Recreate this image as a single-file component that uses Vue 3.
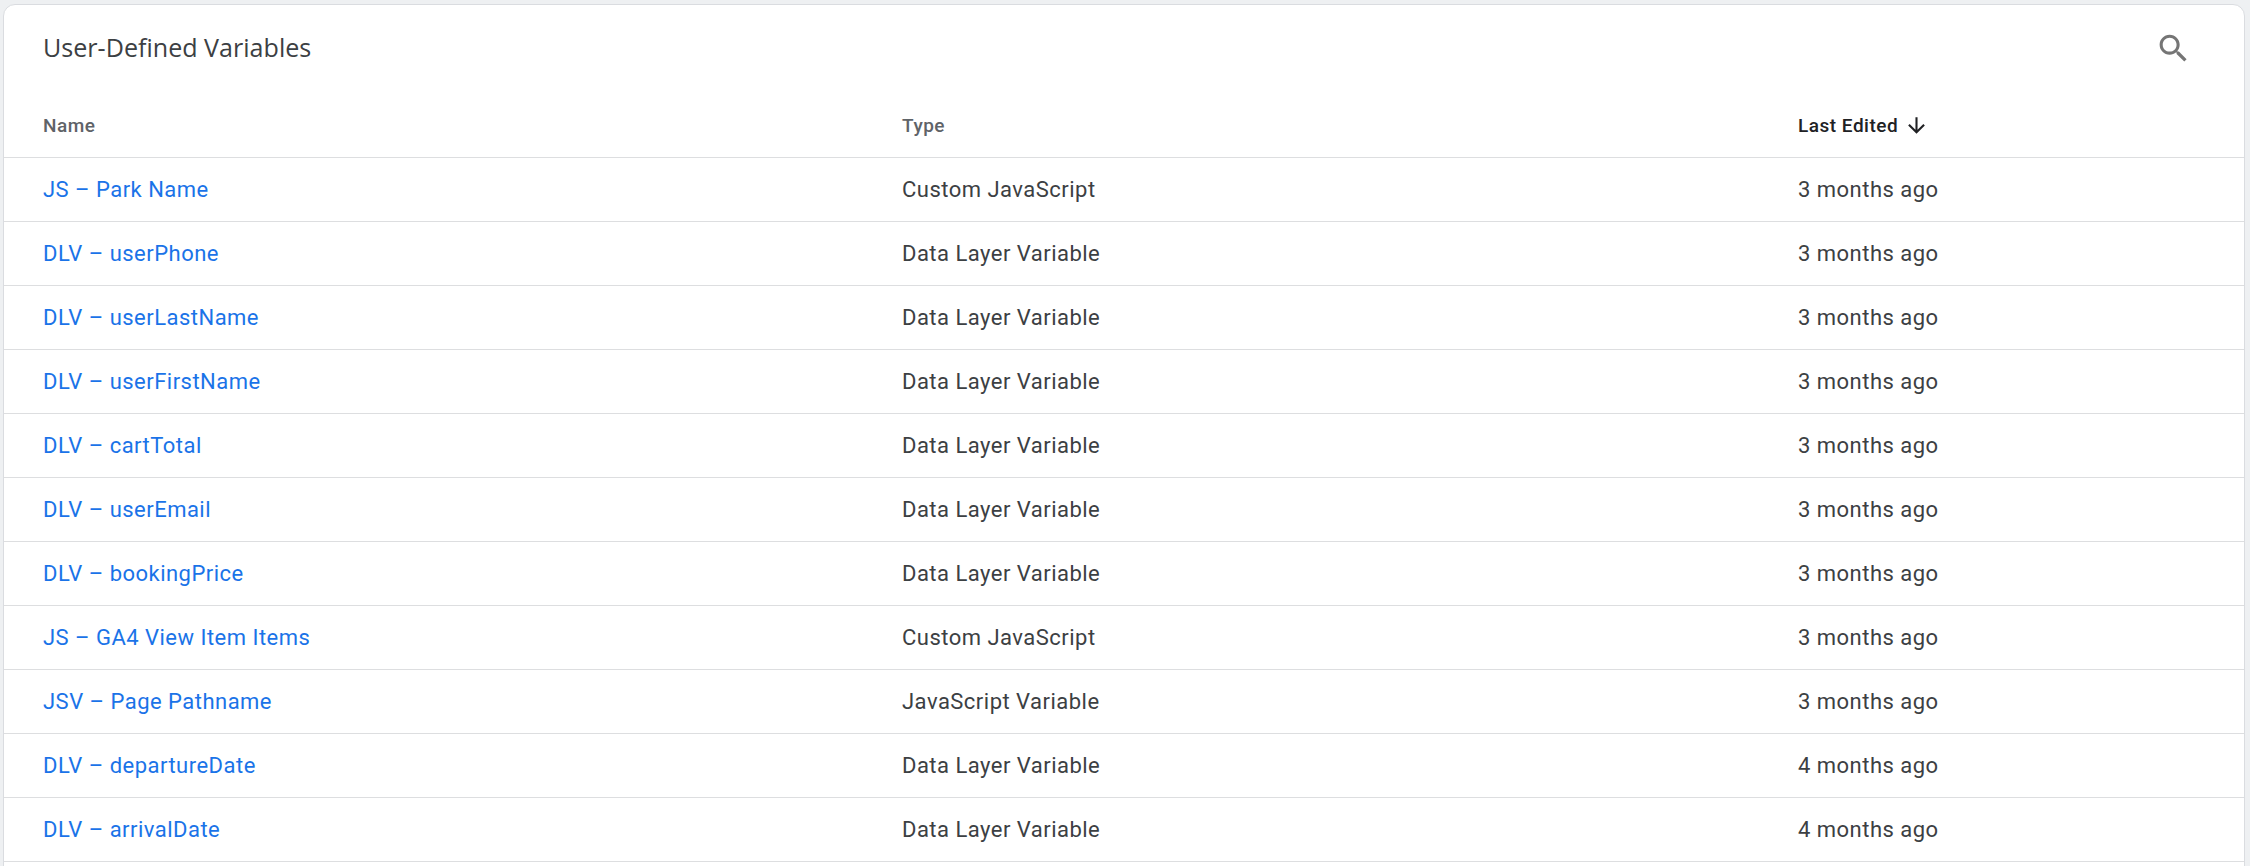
<template>
  <div class="page">
    <div class="card">
      <div class="card-header">
        <div class="title">User-Defined Variables</div>
        <button class="search-btn" aria-label="Search">
          <svg viewBox="0 0 24 24" width="37" height="37">
            <path fill="#757575" d="M15.5 14h-.79l-.28-.27C15.41 12.59 16 11.11 16 9.5 16 5.91 13.09 3 9.5 3S3 5.91 3 9.5 5.91 16 9.5 16c1.61 0 3.09-.59 4.23-1.57l.27.28v.79l5 4.99L20.49 19l-4.99-5zm-6 0C7.01 14 5 11.99 5 9.5S7.01 5 9.5 5 14 7.01 14 9.5 11.99 14 9.5 14z" />
          </svg>
        </button>
      </div>
      <div class="row head">
        <div class="col-name">Name</div>
        <div class="col-type">Type</div>
        <div class="col-edited sorted">
          Last Edited
          <svg viewBox="0 0 24 24" width="25" height="25">
            <path fill="#202124" d="M20 12l-1.41-1.41L13 16.17V4h-2v12.17l-5.58-5.59L4 12l8 8 8-8z" />
          </svg>
        </div>
      </div>
      <div v-for="item in variables" :key="item.name" class="row">
        <div class="col-name"><a class="link" href="#">{{ item.name }}</a></div>
        <div class="col-type">{{ item.type }}</div>
        <div class="col-edited">{{ item.edited }}</div>
      </div>
    </div>
  </div>
</template>

<script setup>
const variables = [
  { name: 'JS – Park Name', type: 'Custom JavaScript', edited: '3 months ago' },
  { name: 'DLV – userPhone', type: 'Data Layer Variable', edited: '3 months ago' },
  { name: 'DLV – userLastName', type: 'Data Layer Variable', edited: '3 months ago' },
  { name: 'DLV – userFirstName', type: 'Data Layer Variable', edited: '3 months ago' },
  { name: 'DLV – cartTotal', type: 'Data Layer Variable', edited: '3 months ago' },
  { name: 'DLV – userEmail', type: 'Data Layer Variable', edited: '3 months ago' },
  { name: 'DLV – bookingPrice', type: 'Data Layer Variable', edited: '3 months ago' },
  { name: 'JS – GA4 View Item Items', type: 'Custom JavaScript', edited: '3 months ago' },
  { name: 'JSV – Page Pathname', type: 'JavaScript Variable', edited: '3 months ago' },
  { name: 'DLV – departureDate', type: 'Data Layer Variable', edited: '4 months ago' },
  { name: 'DLV – arrivalDate', type: 'Data Layer Variable', edited: '4 months ago' }
]
</script>

<style>
html, body {
  margin: 0;
  background: #eef0f2;
  overflow: hidden;
}
</style>

<style scoped>
.page {
  height: 866px;
  padding: 4px 5px 0 3px;
  box-sizing: border-box;
  overflow: hidden;
}

.card {
  min-height: 900px;
  background: #fff;
  border: 1px solid #dadce0;
  border-radius: 12px 12px 0 0;
  font-family: Roboto, "Liberation Sans", sans-serif;
  letter-spacing: 0.48px;
}

.card-header {
  height: 93px;
  display: flex;
  align-items: flex-start;
  justify-content: space-between;
  padding: 0 52px 0 39px;
}

.title {
  margin-top: 26px;
  font-family: "Open Sans", Roboto, sans-serif;
  font-size: 25.1px;
  line-height: 32px;
  color: #3c4043;
  letter-spacing: 0;
}

.search-btn {
  margin-top: 25px;
  width: 37px;
  height: 37px;
  padding: 0;
  border: 0;
  background: none;
}

.row {
  display: grid;
  grid-template-columns: 859px 896px 1fr;
  align-items: center;
  height: 64px;
  box-sizing: border-box;
  padding-left: 39px;
  border-bottom: 1.5px solid #dddee0;
  font-size: 22px;
  color: #3c4043;
}

.head {
  height: 60px;
  padding-bottom: 4px;
  font-size: 19px;
  letter-spacing: 0.5px;
  font-weight: 500;
  color: #5f6368;
}

.sorted {
  display: flex;
  align-items: center;
  gap: 6px;
  color: #202124;
}

.link {
  color: #1a73e8;
  text-decoration: none;
}
</style>
